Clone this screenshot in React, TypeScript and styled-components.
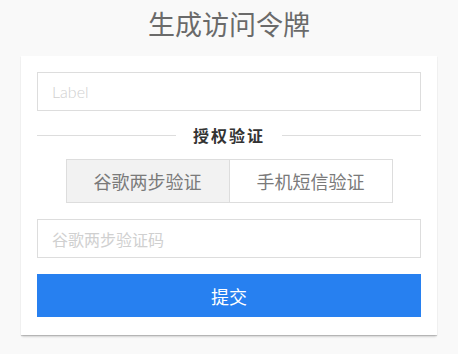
import React, { useState } from 'react';
import styled, { createGlobalStyle } from 'styled-components';

const GlobalStyle = createGlobalStyle`
  html, body {
    margin: 0;
    padding: 0;
    background-color: #f9f9f9;
    font-family: Lato, "Noto Sans CJK SC", sans-serif;
  }
`;

const Page = styled.div`
  width: 458px;
  min-height: 354px;
`;

const Title = styled.h1`
  margin: 0;
  height: 56px;
  line-height: 48px;
  text-align: center;
  font-size: 27px;
  font-weight: 400;
  color: #6a6a6a;
  font-family: "Noto Sans CJK SC", sans-serif;
`;

const Card = styled.div`
  margin: 0 21px;
  padding: 16px 16px 18px;
  background: #fff;
  box-shadow: 0 1px 1px rgba(0, 0, 0, 0.18), 0 3px 2px -1px rgba(0, 0, 0, 0.12);
  display: flex;
  flex-direction: column;
`;

const Input = styled.input`
  box-sizing: border-box;
  height: 39px;
  width: 100%;
  border: 1px solid #ddd;
  padding: 0 14px;
  font-size: 16px;
  font-family: Lato, "Noto Sans CJK SC", sans-serif;
  font-weight: 300;
  color: #333;
  outline: none;

  &::placeholder {
    color: #d0d0d0;
  }
`;

const Divider = styled.div`
  margin-top: 12px;
  height: 24px;
  display: flex;
  align-items: center;
  gap: 17px;

  &::before,
  &::after {
    content: '';
    flex: 1;
    height: 1px;
    background: #ddd;
  }
`;

const DividerText = styled.span`
  font-family: "Noto Sans CJK SC", sans-serif;
  font-size: 16px;
  font-weight: 700;
  letter-spacing: 2px;
  color: #333;
`;

const Toggle = styled.div`
  margin: 12px auto 0;
  display: flex;
  border: 1px solid #ddd;
  width: 327px;
  box-sizing: border-box;
`;

const ToggleButton = styled.button<{ active?: boolean }>`
  flex: 1;
  height: 42px;
  border: none;
  background: ${p => (p.active ? '#f2f2f2' : '#fff')};
  color: #7a7a7a;
  font-family: "Noto Sans CJK SC", sans-serif;
  font-size: 18px;
  padding: 0;
  cursor: pointer;

  &:first-child {
    border-right: 1px solid #ddd;
  }
`;

const CodeInput = styled(Input)`
  margin-top: 16px;
  font-family: "Noto Sans CJK SC", sans-serif;
  font-weight: 400;
`;

const Submit = styled.button`
  margin-top: 16px;
  height: 43px;
  border: none;
  background: #2780f0;
  color: #fff;
  font-family: "Noto Sans CJK SC", sans-serif;
  font-size: 18px;
  cursor: pointer;
`;

const App = () => {
  const [mode, setMode] = useState<'google' | 'sms'>('google');

  return (
    <Page>
      <GlobalStyle />
      <Title>生成访问令牌</Title>
      <Card>
        <Input placeholder="Label" />
        <Divider>
          <DividerText>授权验证</DividerText>
        </Divider>
        <Toggle>
          <ToggleButton active={mode === 'google'} onClick={() => setMode('google')}>
            谷歌两步验证
          </ToggleButton>
          <ToggleButton active={mode === 'sms'} onClick={() => setMode('sms')}>
            手机短信验证
          </ToggleButton>
        </Toggle>
        <CodeInput placeholder={mode === 'google' ? '谷歌两步验证码' : '短信验证码'} />
        <Submit>提交</Submit>
      </Card>
    </Page>
  );
};

export default App;
